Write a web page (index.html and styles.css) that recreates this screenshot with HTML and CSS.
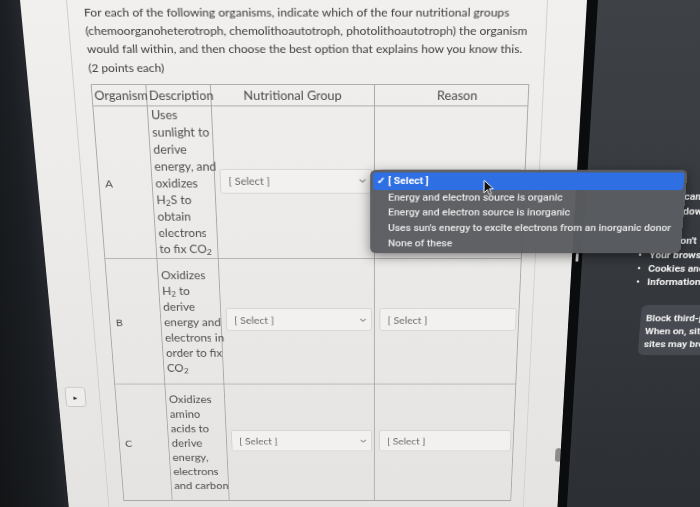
FILE: index.html
```html
<!DOCTYPE html>
<html lang="en">
  <head>
    <meta charset="UTF-8" />
    <title>Nutritional Groups Quiz</title>
    <link rel="stylesheet" href="styles.css">
  </head>
  <body>
    <div class="screen">
      <div class="bezel"></div>

      <main class="page">
        <div class="gutter">
          <span class="collapse">&#9656;</span>
        </div>

        <div class="sheet">
          <p class="question">
            For each of the following organisms, indicate which of the four nutritional groups<br>
            (chemoorganoheterotroph, chemolithoautotroph, photolithoautotroph) the organism<br>
            would fall within, and then choose the best option that explains how you know this.<br>
            (2 points each)
          </p>

          <table class="quiz">
            <colgroup>
              <col class="w-org"><col class="w-desc"><col class="w-group"><col class="w-reason">
            </colgroup>
            <tr class="head">
              <th>Organism</th>
              <th>Description</th>
              <th class="center">Nutritional Group</th>
              <th class="center reason-head">Reason</th>
            </tr>
            <tr class="row-a">
              <td class="label">A</td>
              <td class="desc">Uses<br>sunlight to<br>derive<br>energy, and<br>oxidizes<br>H<sub>2</sub>S to<br>obtain<br>electrons<br>to fix CO<sub>2</sub></td>
              <td class="pick"><div class="select"><span>[ Select ]</span><svg class="chev" viewBox="0 0 8 5"><polyline points="1,1 4,4 7,1"/></svg></div></td>
              <td class="pick"><div class="select"></div></td>
            </tr>
            <tr class="row-b">
              <td class="label">B</td>
              <td class="desc">Oxidizes<br>H<sub>2</sub> to<br>derive<br>energy and<br>electrons in<br>order to fix<br>CO<sub>2</sub></td>
              <td class="pick"><div class="select"><span>[ Select ]</span><svg class="chev" viewBox="0 0 8 5"><polyline points="1,1 4,4 7,1"/></svg></div></td>
              <td class="pick"><div class="select"><span>[ Select ]</span></div></td>
            </tr>
            <tr class="row-c">
              <td class="label">C</td>
              <td class="desc">Oxidizes<br>amino<br>acids to<br>derive<br>energy,<br>electrons<br>and carbon</td>
              <td class="pick"><div class="select"><span>[ Select ]</span><svg class="chev" viewBox="0 0 8 5"><polyline points="1,1 4,4 7,1"/></svg></div></td>
              <td class="pick"><div class="select"><span>[ Select ]</span></div></td>
            </tr>
          </table>
        </div>

        <div class="track">
          <span class="thumb"></span>
        </div>
      </main>

      <div class="edge"><span class="pill"></span></div>

      <aside class="panel">
        <p class="note">cannot<br>down<br>&nbsp;<br>on't</p>
        <ul class="bullets">
          <li><span class="dot">&bull;</span>Your browsing</li>
          <li><span class="dot">&bull;</span>Cookies and</li>
          <li><span class="dot">&bull;</span>Information</li>
        </ul>
        <div class="notice">
          Block third-party<br>
          When on, sites<br>
          sites may break
        </div>
      </aside>

      <ul class="menu">
        <li class="on"><span class="check">&#10003;</span>[ Select ]</li>
        <li>Energy and electron source is organic</li>
        <li>Energy and electron source is inorganic</li>
        <li>Uses sun's energy to excite electrons from an inorganic donor</li>
        <li>None of these</li>
      </ul>

      <svg class="cursor" viewBox="0 0 12 18">
        <path d="M1 1 L1 15 L4.5 11.5 L7 17 L9 16 L6.6 10.6 L11 10.6 Z" />
      </svg>
    </div>
  </body>
</html>
```

FILE: styles.css
```css
* {
  margin: 0;
  padding: 0;
  box-sizing: border-box;
}
html,
body {
  width: 700px;
  height: 507px;
  overflow: hidden;
}
body {
  background-color: #1c1f23;
  font-family: Lato, "Open Sans", sans-serif;
}

/* the photographed monitor, tilted away at the bottom */
.screen {
  position: relative;
  display: flex;
  width: 820px;
  height: 610px;
  margin-left: -60px;
  transform-origin: 433px 0;
  transform: perspective(780px) rotateX(-12deg);
}
.bezel {
  width: 80px;
  background: linear-gradient(90deg, #121416, #1c1f23 80%, #24282d);
}
.page {
  display: flex;
  width: 567px;
  background: linear-gradient(180deg, #f1f0ee, #e9e8e6 60%, #e4e3e1);
}
.gutter {
  width: 47px;
  padding: 442px 0 0 8px;
  border-right: 1px solid #cfcecc;
}
.collapse {
  display: flex;
  align-items: center;
  justify-content: center;
  width: 23px;
  height: 26px;
  border: 1px solid #c3c2c0;
  border-radius: 4px;
  background-color: #eeedeb;
  font-size: 9px;
  color: #2a2a2a;
}
.sheet {
  width: 480px;
  padding: 2.6px 0 0 16px;
}
.question {
  font-size: 12.1px;
  line-height: 19.4px;
  white-space: nowrap;
  color: #3c3c3c;
}

.quiz {
  width: 448px;
  margin: 7.7px 0 0 1px;
  border-collapse: collapse;
  table-layout: fixed;
  color: #505050;
}
.w-org {
  width: 56px;
}
.w-desc {
  width: 66px;
}
.w-group {
  width: 168px;
}
.w-reason {
  width: 158px;
}
.quiz th,
.quiz td {
  border: 1px solid #aaa9a7;
}
.quiz th {
  height: 23px;
  padding: 0 2px;
  font-size: 13px;
  font-weight: normal;
  text-align: left;
  white-space: nowrap;
  color: #4a4a4a;
}
.quiz th.center {
  text-align: center;
}
.quiz th.reason-head {
  padding-left: 14px;
}
.row-a {
  height: 173px;
}
.row-b,
.row-c {
  height: 154px;
}
.label {
  padding-left: 6px;
  font-size: 12px;
  vertical-align: middle;
}
.desc {
  padding: 0 0 0 3px;
  font-size: 12.8px;
  line-height: 19px;
  vertical-align: middle;
  white-space: nowrap;
}
sub {
  font-size: 0.7em;
  line-height: 0;
  vertical-align: -0.25em;
}
.pick {
  padding: 0 2px 0 5px;
  vertical-align: middle;
}
.select {
  display: flex;
  align-items: center;
  justify-content: space-between;
  height: 28px;
  margin-bottom: 6px;
  padding: 0 5px 0 8px;
  border: 1px solid #d4d3d1;
  border-radius: 3px;
  background-color: #f2f1ef;
  font-size: 11.5px;
  color: #686868;
}
.chev {
  width: 8px;
  height: 5px;
  fill: none;
  stroke: #8a8a8a;
  stroke-width: 1.2;
}

.track {
  width: 40px;
  padding: 522px 0 0 33px;
  border-left: 1px solid #d2d1cf;
}
.thumb {
  display: block;
  width: 7px;
  height: 18px;
  border-radius: 4px;
  background-color: #8c8c8c;
}
.edge {
  width: 11px;
  padding: 278px 0 0 4px;
  background-color: #0b0c0e;
}
.pill {
  display: block;
  width: 3px;
  height: 10px;
  border-radius: 2px;
  background-color: #dcdcdc;
}

.panel {
  flex: 1;
  padding-top: 204px;
  overflow: hidden;
  white-space: nowrap;
  background: linear-gradient(180deg, #3e4146, #33363b 60%, #2b2e33);
  font-family: Roboto, "Liberation Sans", sans-serif;
  font-size: 11px;
  font-weight: 700;
  color: #f2f2f2;
}
.note {
  padding-left: 104px;
  line-height: 17px;
}
.bullets {
  margin-top: 1px;
  padding-left: 60px;
  list-style: none;
  line-height: 16px;
}
.dot {
  display: inline-block;
  width: 12px;
}
.notice {
  height: 62px;
  margin: 19px 0 0 68px;
  padding: 9px 0 0 6px;
  border-radius: 7px;
  background-color: #474a50;
  line-height: 16px;
}

/* open dropdown of the first Reason select */
.menu {
  position: absolute;
  left: 430px;
  top: 182px;
  width: 333px;
  height: 96px;
  padding: 2.5px 3px;
  list-style: none;
  border-radius: 6px;
  background-color: rgba(90, 92, 96, 0.97);
  box-shadow: 0 4px 14px rgba(0, 0, 0, 0.45);
  font-family: Roboto, "Liberation Sans", sans-serif;
  font-size: 11px;
  font-weight: 500;
  color: #e9e9e9;
}
.menu li {
  padding-left: 16px;
  line-height: 17.7px;
}
.menu li.on {
  display: flex;
  align-items: center;
  height: 20px;
  padding-left: 4px;
  border-radius: 3px;
  background-color: #2f6fe4;
  font-weight: 700;
  color: #ffffff;
}
.check {
  display: inline-block;
  width: 12px;
}
.cursor {
  position: absolute;
  left: 549px;
  top: 193px;
  width: 12px;
  height: 18px;
  fill: #111;
  stroke: #fff;
  stroke-width: 1;
}
```
